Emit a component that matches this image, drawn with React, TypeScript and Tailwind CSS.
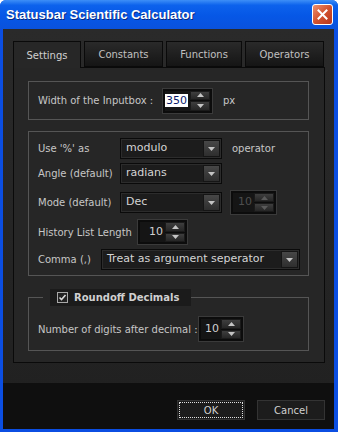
import React from "react";

const font = "font-['DejaVu_Sans',sans-serif]";

const Arrow = ({ up, dim }: { up?: boolean; dim?: boolean }) => (
  <svg width="7" height="4" viewBox="0 0 7 4">
    <path
      d={up ? "M0 4 L3.5 0 L7 4 Z" : "M0 0 L3.5 4 L7 0 Z"}
      fill={dim ? "#5a5a5a" : "#c4c4c4"}
    />
  </svg>
);

const Spin = ({
  value,
  width,
  height,
  selected,
  disabled,
}: {
  value: string;
  width: string;
  height: string;
  selected?: boolean;
  disabled?: boolean;
}) => (
  <div
    className={`${width} ${height} shrink-0 flex border border-[#3a3a3a] bg-[#0c0c0c] p-[2px]`}
  >
    <div className="flex-1 flex items-center justify-end pr-[2px] bg-[#151515]">
      {selected ? (
        <span className="bg-white text-[#0a1a6a] px-[1px] leading-[13px] text-[11px]">
          {value}
        </span>
      ) : (
        <span
          className={`text-[11px] ${disabled ? "text-[#4e4e4e]" : "text-[#d0d0d0]"}`}
        >
          {value}
        </span>
      )}
    </div>
    <div className="w-[20px] flex flex-col gap-px">
      <div className="flex-1 flex items-center justify-center bg-[linear-gradient(to_bottom,#3e3e3e,#262626)] border border-[#1a1a1a]">
        <Arrow up dim={disabled} />
      </div>
      <div className="flex-1 flex items-center justify-center bg-[linear-gradient(to_bottom,#3e3e3e,#262626)] border border-[#1a1a1a]">
        <Arrow dim={disabled} />
      </div>
    </div>
  </div>
);

const Select = ({ value, width }: { value: string; width: string }) => (
  <div
    className={`${width} h-[21px] shrink-0 flex items-center border border-[#0a0a0a] bg-[#1c1c1c] shadow-[inset_0_0_0_1px_#2c2c2c]`}
  >
    <span className="flex-1 pl-[5px] text-[11px] text-[#d4d4d4] whitespace-nowrap">{value}</span>
    <div className="w-[17px] h-[17px] mr-[1px] flex items-center justify-center bg-[linear-gradient(to_bottom,#474747,#2e2e2e)] border border-[#151515]">
      <Arrow />
    </div>
  </div>
);

const tabs = ["Settings", "Constants", "Functions", "Operators"];
const tabWidths = ["w-[68px]", "w-[79px]", "w-[76px]", "w-[79px]"];

export default function App() {
  return (
    <div
      className={`w-[338px] h-[432px] flex flex-col bg-[#0b4ee2] rounded-t-[6px] overflow-hidden ${font} text-[10px] text-[#c6c6c6] whitespace-nowrap`}
    >
      {/* title bar */}
      <div className="h-[29px] flex items-center pl-[6px] pr-[5px] bg-[linear-gradient(to_bottom,#3d8ff7_0%,#0c62ec_18%,#0657e6_55%,#0a52dc_100%)]">
        <span className="flex-1 font-['Liberation_Sans',sans-serif] font-bold text-[13px] text-white [text-shadow:1px_1px_0_#0a2a80]">
          Statusbar Scientific Calculator
        </span>
        <div className="w-[21px] h-[21px] rounded-[3px] border border-white bg-[linear-gradient(135deg,#ee9070,#d2522e_50%,#b8361c)] flex items-center justify-center">
          <svg width="11" height="11" viewBox="0 0 11 11">
            <path d="M1.5 1.5 L9.5 9.5 M9.5 1.5 L1.5 9.5" stroke="white" strokeWidth="2" strokeLinecap="square" />
          </svg>
        </div>
      </div>

      {/* body */}
      <div className="flex-1 ml-[3px] mr-[4px] mb-[3px] flex flex-col bg-[linear-gradient(to_bottom,#2a2a2a,#202020)]">
        <div className="pt-[11px] pl-[10px] pr-[9px]">
          <div className="flex items-end gap-[3px] h-[27px]">
            {tabs.map((t, i) => (
              <div
                key={t}
                className={
                  i === 0
                    ? `${tabWidths[i]} h-[27px] relative z-10 -mb-px flex items-center justify-center border border-b-0 border-[#0a0a0a] bg-[#272727] text-[#d0d0d0]`
                    : `${tabWidths[i]} h-[26px] flex items-center justify-center border border-[#0a0a0a] bg-[linear-gradient(to_bottom,#2a2a2a,#151515)] text-[#c0c0c0]`
                }
              >
                {t}
              </div>
            ))}
          </div>

          {/* panel */}
          <div className="h-[296px] border border-[#0a0a0a] bg-[#262626] pt-[13px] pl-[14px] pr-[15px] flex flex-col">
            <div className="h-[39px] border border-[#555] flex items-center pl-[9px]">
              <span className="w-[124px] shrink-0">Width of the Inputbox :</span>
              <Spin value="350" width="w-[51px]" height="h-[26px]" selected />
              <span className="ml-[10px]">px</span>
            </div>

            <div className="mt-[11px] h-[145px] border border-[#555] pl-[9px] pt-[6px] flex flex-col">
              <div className="flex items-center h-[21px]">
                <span className="w-[82px] shrink-0">Use '%' as</span>
                <Select value="modulo" width="w-[102px]" />
                <span className="ml-[10px]">operator</span>
              </div>
              <div className="flex items-center h-[21px] mt-[4px]">
                <span className="w-[82px] shrink-0">Angle (default)</span>
                <Select value="radians" width="w-[102px]" />
              </div>
              <div className="flex items-center h-[25px] mt-[6px]">
                <span className="w-[82px] shrink-0">Mode (default)</span>
                <Select value="Dec" width="w-[102px]" />
                <div className="ml-[8px]">
                  <Spin value="10" width="w-[47px]" height="h-[25px]" disabled />
                </div>
              </div>
              <div className="flex items-center h-[26px] mt-[4px]">
                <span className="w-[99px] shrink-0">History List Length</span>
                <Spin value="10" width="w-[51px]" height="h-[26px]" />
              </div>
              <div className="flex items-center h-[21px] mt-[4px]">
                <span className="w-[63px] shrink-0">Comma (,)</span>
                <Select value="Treat as argument seperator" width="w-[199px]" />
              </div>
            </div>

            <fieldset className="mt-[13px] h-[62px] border border-[#555] pl-[9px]">
              <legend className="ml-[5px] pl-[7px]">
                <div className="h-[17px] flex items-center bg-[#1b1b1b] pl-[7px] pr-[12px] gap-[6px]">
                  <div className="w-[11px] h-[11px] border border-[#a8a8a8] bg-[#222] flex items-center justify-center">
                    <svg width="9" height="9" viewBox="0 0 9 9">
                      <path d="M1.5 4.5 L3.5 6.5 L7.5 2" stroke="#d8d8d8" strokeWidth="1.6" fill="none" />
                    </svg>
                  </div>
                  <span className="font-bold text-[#d0d0d0]">Roundoff Decimals</span>
                </div>
              </legend>
              <div className="flex items-center mt-[10px]">
                <span className="w-[160px] shrink-0">Number of digits after decimal :</span>
                <Spin value="10" width="w-[46px]" height="h-[26px]" />
              </div>
            </fieldset>
          </div>
        </div>

        <div className="mt-[20px] flex-1 bg-[#0f0f0f] flex justify-end items-start pt-[17px] pr-[9px] gap-[12px]">
          <div className="w-[68px] h-[20px] border border-[#333] bg-[#1c1c1c] p-[1px]">
            <div className="h-full border border-dotted border-[#e0e0e0] flex items-center justify-center text-[#d0d0d0]">
              OK
            </div>
          </div>
          <div className="w-[68px] h-[20px] border border-[#333] bg-[#1c1c1c] flex items-center justify-center text-[#d0d0d0]">
            Cancel
          </div>
        </div>
      </div>
    </div>
  );
}
